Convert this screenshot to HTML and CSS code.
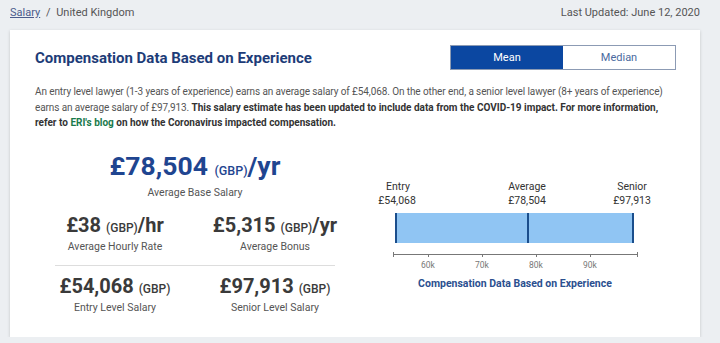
FILE: index.html
```html
<!DOCTYPE html>
<html lang="en">
<head>
  <meta charset="UTF-8" />
  <title>Lawyer Salary - United Kingdom</title>
  <link rel="stylesheet" href="styles.css">
</head>
<body>
  <div class="topbar">
    <div class="crumbs"><a href="#">Salary</a> <span class="sep">/</span> United Kingdom</div>
    <div class="updated">Last Updated: June 12, 2020</div>
  </div>

  <div class="card">
    <div class="card-head">
      <h2>Compensation Data Based on Experience</h2>
      <div class="toggle">
        <button class="active">Mean</button>
        <button>Median</button>
      </div>
    </div>

    <p class="intro">
      An entry level lawyer (1-3 years of experience) earns an average salary of £54,068. On the other end, a senior level lawyer (8+ years of experience) earns an average salary of £97,913.
      <b>This salary estimate has been updated to include data from the COVID-19 impact. For more information, refer to <a href="#">ERI's blog</a> on how the Coronavirus impacted compensation.</b>
    </p>

    <div class="stats">
      <div class="figures">
        <div class="main-figure">
          <div class="amount big">£78,504 <small>(GBP)</small>/yr</div>
          <div class="label">Average Base Salary</div>
        </div>
        <div class="pair">
          <div class="figure">
            <div class="amount">£38 <small>(GBP)</small>/hr</div>
            <div class="label">Average Hourly Rate</div>
          </div>
          <div class="figure">
            <div class="amount">£5,315 <small>(GBP)</small>/yr</div>
            <div class="label">Average Bonus</div>
          </div>
        </div>
        <hr>
        <div class="pair">
          <div class="figure">
            <div class="amount">£54,068 <small>(GBP)</small></div>
            <div class="label">Entry Level Salary</div>
          </div>
          <div class="figure">
            <div class="amount">£97,913 <small>(GBP)</small></div>
            <div class="label">Senior Level Salary</div>
          </div>
        </div>
      </div>

      <div class="chart">
        <svg width="320" height="94" viewBox="0 0 320 94">
          <g class="marks">
            <text x="43" y="11">Entry</text>
            <text x="42" y="25">£54,068</text>
            <text x="172" y="11">Average</text>
            <text x="172" y="25">£78,504</text>
            <text x="277" y="11">Senior</text>
            <text x="277" y="25">£97,913</text>
          </g>
          <rect x="40" y="34" width="239" height="30" fill="#90c5f3" />
          <rect x="40" y="34" width="2" height="30" fill="#1b4e8c" />
          <rect x="172" y="34" width="2" height="30" fill="#1b4e8c" />
          <rect x="277" y="34" width="2" height="30" fill="#1b4e8c" />
          <g class="axis">
            <line x1="38" y1="75.5" x2="283" y2="75.5" />
            <line x1="38.5" y1="73" x2="38.5" y2="78" />
            <line x1="73.5" y1="75" x2="73.5" y2="78" />
            <line x1="127.5" y1="75" x2="127.5" y2="78" />
            <line x1="181.5" y1="75" x2="181.5" y2="78" />
            <line x1="235.5" y1="75" x2="235.5" y2="78" />
            <line x1="282.5" y1="73" x2="282.5" y2="78" />
          </g>
          <g class="ticks">
            <text x="73" y="89">60k</text>
            <text x="127" y="89">70k</text>
            <text x="181" y="89">80k</text>
            <text x="235" y="89">90k</text>
          </g>
        </svg>
        <div class="caption">Compensation Data Based on Experience</div>
      </div>
    </div>
  </div>
</body>
</html>
```

FILE: styles.css
```css
body {
  margin: 0;
  background: #eceff2;
  font-family: Roboto, "Liberation Sans", sans-serif;
  color: #555;
}
.topbar {
  display: flex;
  justify-content: space-between;
  align-items: center;
  height: 25px;
  padding: 0 20px 0 10px;
  font-size: 11px;
  color: #555;
}
.crumbs a {
  color: #4b5c8c;
}
.crumbs .sep {
  margin: 0 3px;
}
.card {
  margin: 5px 20px 0 10px;
  height: 307px;
  box-sizing: border-box;
  background: #fff;
  box-shadow: 0 1px 3px rgba(0,0,0,0.18);
  padding: 15px 24px 0 25px;
}
.card-head {
  display: flex;
  justify-content: space-between;
  align-items: center;
}
.card-head h2 {
  margin: 0;
  font-size: 15px;
  font-weight: 700;
  color: #1d3c78;
}
.toggle {
  display: flex;
  border: 1px solid #8c9bb4;
}
.toggle button {
  width: 112px;
  height: 23px;
  border: none;
  background: #fff;
  color: #4a6aa0;
  font-family: inherit;
  font-size: 11px;
  padding: 0;
}
.toggle button.active {
  background: #0b47a1;
  color: #fff;
}
.intro {
  margin: 14px 0 0;
  font-size: 10px;
  letter-spacing: -0.1px;
  line-height: 15.5px;
  color: #555;
}
.intro b {
  color: #333;
  letter-spacing: 0;
}
.intro a {
  color: #1a7a4c;
  text-decoration: none;
}
.stats {
  display: grid;
  grid-template-columns: 320px 320px;
  margin-top: 20px;
}
.figures {
  text-align: center;
}
.amount {
  font-size: 20px;
  font-weight: 700;
  color: #3a3a3a;
  line-height: 24px;
}
.amount small {
  font-size: 12px;
  font-weight: 500;
}
.amount.big {
  font-size: 26.5px;
  line-height: 30px;
  color: #1f4590;
}
.amount.big small {
  font-size: 12.5px;
}
.label {
  font-size: 10.5px;
  color: #555;
  line-height: 14px;
}
.pair {
  display: grid;
  grid-template-columns: 1fr 1fr;
  margin-top: 13px;
}
hr {
  margin: 11px 20px 0;
  border: none;
  border-top: 1px solid #ddd;
}
.pair + hr + .pair {
  margin-top: 8px;
}
.chart {
  text-align: center;
  padding-top: 28px;
}
.chart svg {
  display: block;
}
.marks text {
  font-size: 10.5px;
  fill: #333;
  text-anchor: middle;
}
.axis line {
  stroke: #777;
  stroke-width: 1;
}
.ticks text {
  font-size: 8.5px;
  fill: #777;
  text-anchor: middle;
}
.caption {
  margin-top: 4px;
  font-size: 10.5px;
  font-weight: 700;
  color: #2b4f8f;
}
```
